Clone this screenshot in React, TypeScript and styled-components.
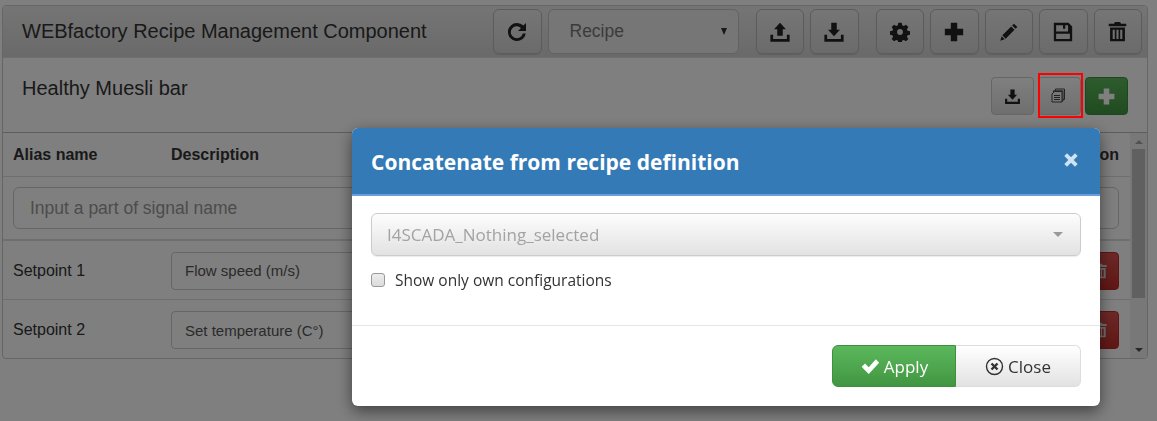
import React from 'react';
import styled, { createGlobalStyle } from 'styled-components';

const GlobalStyle = createGlobalStyle`
  html, body {
    margin: 0;
    padding: 0;
    background: #fff;
    font-family: 'Liberation Sans', Arial, sans-serif;
    color: #333;
  }
  * { box-sizing: border-box; }
`;

const Glyph = ({ d, size = 20 }: { d: string; size?: number }) => (
  <svg width={size} height={size} viewBox="0 0 24 24" fill="currentColor" fillRule="evenodd">
    <path d={d} />
  </svg>
);

const icons = {
  refresh:
    'M12 3a9 9 0 0 1 6.4 2.6L21 3v8h-8l3-3a6 6 0 1 0 1.7 5.5h3.1A9 9 0 1 1 12 3Z',
  upload:
    'M12 2l6.5 7H15v7H9V9H5.5ZM1.5 15h3v4.5h15V15h3v7.5h-21Z',
  download:
    'M9 2h6v7.5h3.5L12 16.5 5.5 9.5H9ZM1.5 15h3v4.5h15V15h3v7.5h-21Z',
  cog:
    'M10 1h4l.6 3 2 .9 2.6-1.7 2.8 2.8-1.7 2.6.8 2 3 .6v4l-3 .6-.8 2 1.7 2.6-2.8 2.8-2.6-1.7-2 .8-.6 3h-4l-.6-3-2-.8-2.6 1.7-2.8-2.8 1.7-2.6-.8-2-3-.6v-4l3-.6.8-2-1.7-2.6 2.8-2.8 2.6 1.7 2-.9ZM12 8.5a3.5 3.5 0 1 0 0 7 3.5 3.5 0 0 0 0-7Z',
  plus: 'M8.5 2h7v6.5H22v7h-6.5V22h-7v-6.5H2v-7h6.5Z',
  pencil:
    'M18 2l4 4-2.2 2.2-4-4ZM14.6 5.4l4 4L8 20l-4-4ZM3.2 17.2l3.6 3.6L1.5 22.5Z',
  save:
    'M2 2h16l4 4v16H2ZM4.5 4.5v7h13V4.5h-3v4h-2.5v-4ZM4.5 14v5.5h15V14Z',
  trash:
    'M9 1h6l1 2h6v3H2V3h6ZM3.5 7.5h17V23h-17ZM6.5 10v10.5h2.4V10ZM10.8 10v10.5h2.4V10ZM15.1 10v10.5h2.4V10Z',
  close: 'M6 2l6 6 6-6 4 4-6 6 6 6-4 4-6-6-6 6-4-4 6-6-6-6Z',
  check: 'M2 13l4-4 4.5 4.5L19 4l4 4-12.5 13.5Z',
};

const CopyIcon = () => (
  <svg width="15" height="15" viewBox="0 0 15 15" fill="none" stroke="currentColor" strokeWidth="1">
    <path d="M4.5 2.5V1h9v10.5H12M2.5 4.5V2.8h9.5V13h-1" />
    <path d="M3.5 3.5h7.5V14H1V6Z" fill="#eee" />
    <path d="M3 7.5h6M3 9.5h6M3 11.5h6" />
  </svg>
);

const CloseCircle = () => (
  <svg width="19" height="19" viewBox="0 0 19 19">
    <circle cx="9.5" cy="9.5" r="8" fill="none" stroke="#333" strokeWidth="1.4" />
    <path d="M6.5 6.5l6 6M12.5 6.5l-6 6" stroke="#333" strokeWidth="2.4" />
  </svg>
);

export default function App() {
  return (
    <Page>
      <GlobalStyle />
      <Panel>
        <PanelHeader>
          <Title>WEBfactory Recipe Management Component</Title>
          <Toolbar>
            <ToolGroup>
              <ToolButton><Glyph d={icons.refresh} size={24} /></ToolButton>
              <RecipeSelect>
                <span>Recipe</span>
                <SmallCaret />
              </RecipeSelect>
            </ToolGroup>
            <ToolGroup>
              <ToolButton><Glyph d={icons.upload} size={22} /></ToolButton>
              <ToolButton><Glyph d={icons.download} size={22} /></ToolButton>
            </ToolGroup>
            <ToolGroup>
              <ToolButton><Glyph d={icons.cog} /></ToolButton>
              <ToolButton><Glyph d={icons.plus} size={22} /></ToolButton>
              <ToolButton><Glyph d={icons.pencil} /></ToolButton>
              <ToolButton><Glyph d={icons.save} size={22} /></ToolButton>
              <ToolButton><Glyph d={icons.trash} size={21} /></ToolButton>
            </ToolGroup>
          </Toolbar>
        </PanelHeader>

        <SubHeader>
          <SubTitle>Healthy Muesli bar</SubTitle>
          <SubActions>
            <SubButton><Glyph d={icons.download} size={17} /></SubButton>
            <CopyButton><CopyIcon /></CopyButton>
            <AddButton><Glyph d={icons.plus} size={19} /></AddButton>
          </SubActions>
        </SubHeader>

        <TableArea>
          <TableBody>
            <HeadRow>
              <span>Alias name</span>
              <span>Description</span>
              <ActionHead>Action</ActionHead>
            </HeadRow>
            <FilterRow>
              <FilterInput placeholder="Input a part of signal name" />
            </FilterRow>
            <DataRow>
              <span>Setpoint 1</span>
              <CellInput defaultValue="Flow speed (m/s)" />
              <DeleteButton><Glyph d={icons.trash} size={16} /></DeleteButton>
            </DataRow>
            <DataRow>
              <span>Setpoint 2</span>
              <CellInput defaultValue="Set temperature (C°)" />
              <DeleteButton><Glyph d={icons.trash} size={16} /></DeleteButton>
            </DataRow>
          </TableBody>
          <Scrollbar>
            <ArrowUp />
            <Track><Thumb /></Track>
            <ArrowDown />
          </Scrollbar>
        </TableArea>
      </Panel>

      <Backdrop>
        <Highlight />
        <Modal>
          <ModalHeader>
            <ModalTitle>Concatenate from recipe definition</ModalTitle>
            <ModalClose><Glyph d={icons.close} size={16} /></ModalClose>
          </ModalHeader>
          <ModalBody>
            <DefinitionSelect>
              <span>I4SCADA_Nothing_selected</span>
              <GreyCaret />
            </DefinitionSelect>
            <CheckLabel>
              <CheckBox />
              <span>Show only own configurations</span>
            </CheckLabel>
          </ModalBody>
          <ModalFooter>
            <ApplyButton><Glyph d={icons.check} size={20} />Apply</ApplyButton>
            <CloseButton><CloseCircle />Close</CloseButton>
          </ModalFooter>
        </Modal>
      </Backdrop>
    </Page>
  );
}

const Page = styled.div`
  width: 1157px;
  height: 421px;
  padding: 5px 9px 0 2px;
  overflow: hidden;
`;

const Panel = styled.div`
  height: 354px;
  border: 1px solid #ccc;
  border-radius: 4px;
  overflow: hidden;
  background: #fff;
`;

const PanelHeader = styled.div`
  height: 52px;
  display: flex;
  align-items: center;
  justify-content: space-between;
  padding: 0 5px 0 19px;
  background: linear-gradient(#eaeaea, #d4d4d4);
  border-bottom: 1px solid #ddd;
`;

const Title = styled.div`
  font-size: 20px;
  color: #333;
`;

const Toolbar = styled.div`
  display: flex;
  gap: 17px;
`;

const ToolGroup = styled.div`
  display: flex;
  gap: 6px;
`;

const ToolButton = styled.button`
  width: 48.5px;
  height: 45px;
  padding: 0;
  display: flex;
  align-items: center;
  justify-content: center;
  color: #222;
  border: 1px solid #b8b8b8;
  border-radius: 6px;
  background: linear-gradient(#ececec, #d6d6d6);
  box-shadow: 0 1px 1px rgba(0, 0, 0, 0.1);
`;

const RecipeSelect = styled.div`
  width: 191px;
  height: 45px;
  display: flex;
  align-items: center;
  justify-content: space-between;
  padding: 0 11px 0 21px;
  font-size: 17.5px;
  color: #777;
  border: 1px solid #c4c4c4;
  border-radius: 6px;
  background: #ececec;
`;

const SmallCaret = styled.i`
  width: 0;
  height: 0;
  border-left: 3.5px solid transparent;
  border-right: 3.5px solid transparent;
  border-top: 7px solid #333;
`;

const SubHeader = styled.div`
  height: 75px;
  display: flex;
  justify-content: space-between;
  padding: 19px 19px 0 19px;
  border-bottom: 1px solid #bbb;
`;

const SubTitle = styled.div`
  font-size: 20px;
  color: #333;
`;

const SubActions = styled.div`
  display: flex;
  gap: 4px;
`;

const SubButton = styled.button`
  width: 43px;
  height: 38px;
  padding: 0;
  display: flex;
  align-items: center;
  justify-content: center;
  color: #222;
  border: 1px solid #ccc;
  border-radius: 4px;
  background: linear-gradient(#fff, #dedede);
`;

const CopyButton = styled(SubButton)`
  padding: 0 2px 2px 0;
  color: #444;
`;

const AddButton = styled(SubButton)`
  color: #fff;
  border-color: #3e8f3e;
  background: linear-gradient(#5cb85c, #419641);
`;

const TableArea = styled.div`
  display: flex;
  height: 226px;
`;

const TableBody = styled.div`
  flex: 1;
  min-width: 0;
  font-size: 16px;
`;

const HeadRow = styled.div`
  height: 44px;
  display: grid;
  grid-template-columns: 158px 1fr auto;
  align-items: center;
  padding: 0 11px 0 10px;
  font-weight: 700;
  color: #333;
  border-bottom: 1px solid #ddd;
`;

const ActionHead = styled.span`
  text-align: right;
`;

const FilterRow = styled.div`
  height: 64px;
  padding: 10px 11px 0 10px;
  border-bottom: 2px solid #ddd;
`;

const FilterInput = styled.input`
  width: 100%;
  height: 42px;
  padding: 0 16px;
  font-family: inherit;
  font-size: 17.5px;
  color: #555;
  border: 1px solid #ccc;
  border-radius: 6px;
  &::placeholder {
    color: #999;
    opacity: 1;
  }
`;

const DataRow = styled.div`
  height: 59px;
  display: grid;
  grid-template-columns: 158px 1fr 38px;
  align-items: center;
  padding: 1px 11px 0 10px;
  color: #333;
  &:not(:last-child) {
    border-bottom: 1px solid #ddd;
  }
`;

const CellInput = styled.input`
  width: 100%;
  height: 38px;
  padding: 0 13px;
  font-family: inherit;
  font-size: 15px;
  color: #555;
  border: 1px solid #ccc;
  border-radius: 4px;
`;

const DeleteButton = styled.button`
  height: 38px;
  padding: 0;
  display: flex;
  align-items: center;
  justify-content: center;
  color: #ddd;
  border: 1px solid #b92c28;
  border-radius: 4px;
  background: linear-gradient(#d9534f, #c12e2a);
`;

const Scrollbar = styled.div`
  width: 17px;
  display: flex;
  flex-direction: column;
  align-items: center;
  background: #f1f1f1;
`;

const ArrowUp = styled.i`
  flex: none;
  margin: 7px 0 5px;
  width: 0;
  height: 0;
  border-left: 4px solid transparent;
  border-right: 4px solid transparent;
  border-bottom: 4px solid #a3a3a3;
`;

const ArrowDown = styled.i`
  flex: none;
  margin: 0 0 7px;
  width: 0;
  height: 0;
  border-left: 4px solid transparent;
  border-right: 4px solid transparent;
  border-top: 4px solid #505050;
`;

const Track = styled.div`
  flex: 1;
  width: 100%;
  padding: 0 2px;
`;

const Thumb = styled.div`
  height: 149px;
  background: #c1c1c1;
`;

const Backdrop = styled.div`
  position: fixed;
  inset: 0;
  padding: 128px 57px 0 352px;
  background: rgba(0, 0, 0, 0.5);
`;

/* the red annotation frame sits on top of the dimmed page */
const Highlight = styled.div`
  position: absolute;
  left: 1038px;
  top: 73px;
  width: 45px;
  height: 45px;
  border: 2px solid #f00;
`;

const Modal = styled.div`
  height: 278px;
  display: flex;
  flex-direction: column;
  background: #fff;
  border-radius: 6px;
  overflow: hidden;
  font-family: 'Open Sans', sans-serif;
  box-shadow: 0 5px 15px rgba(0, 0, 0, 0.5);
`;

const ModalHeader = styled.div`
  height: 68px;
  flex: none;
  display: flex;
  align-items: center;
  justify-content: space-between;
  padding: 0 21px 2px 19px;
  color: #fff;
  background: #337ab7;
  border-bottom: 2px solid #6a9fdc;
`;

const ModalTitle = styled.div`
  margin-top: 3px;
  font-size: 21px;
  font-weight: 700;
`;

const ModalClose = styled.span`
  display: flex;
  color: #cfe3f3;
`;

const ModalBody = styled.div`
  height: 130px;
  flex: none;
  padding: 17px 19px 0;
  border-bottom: 1px solid #e5e5e5;
`;

const DefinitionSelect = styled.div`
  height: 43px;
  display: flex;
  align-items: center;
  justify-content: space-between;
  padding: 0 17px 0 15px;
  font-size: 17px;
  color: #a3a3a3;
  border: 1px solid #ccc;
  border-radius: 6px;
  background: linear-gradient(#fdfdfd, #e2e2e2);
  box-shadow: 0 1px 1px rgba(0, 0, 0, 0.08);
`;

const GreyCaret = styled.i`
  width: 0;
  height: 0;
  border-left: 5px solid transparent;
  border-right: 5px solid transparent;
  border-top: 5px solid #999;
`;

const CheckLabel = styled.label`
  display: flex;
  align-items: center;
  gap: 10px;
  margin-top: 13px;
  font-size: 15.5px;
  line-height: 22px;
  color: #333;
`;

const CheckBox = styled.i`
  width: 14px;
  height: 14px;
  border: 1px solid #9a9a9a;
  border-radius: 3px;
  background: linear-gradient(#ececec, #dcdcdc);
`;

const ModalFooter = styled.div`
  flex: 1;
  display: flex;
  justify-content: flex-end;
  padding: 19px 19px 0 0;
`;

const FooterButton = styled.button`
  width: 125px;
  height: 42px;
  padding: 0;
  display: flex;
  align-items: center;
  justify-content: center;
  gap: 4px;
  font-family: inherit;
  font-size: 17px;
`;

const ApplyButton = styled(FooterButton)`
  width: 124px;
  color: #fff;
  border: 1px solid #3e8f3e;
  border-radius: 6px 0 0 6px;
  background: linear-gradient(#5cb85c, #419641);
`;

const CloseButton = styled(FooterButton)`
  color: #333;
  border: 1px solid #ddd;
  border-left: 0;
  border-radius: 0 6px 6px 0;
  background: linear-gradient(#fff, #e2e2e2);
`;
